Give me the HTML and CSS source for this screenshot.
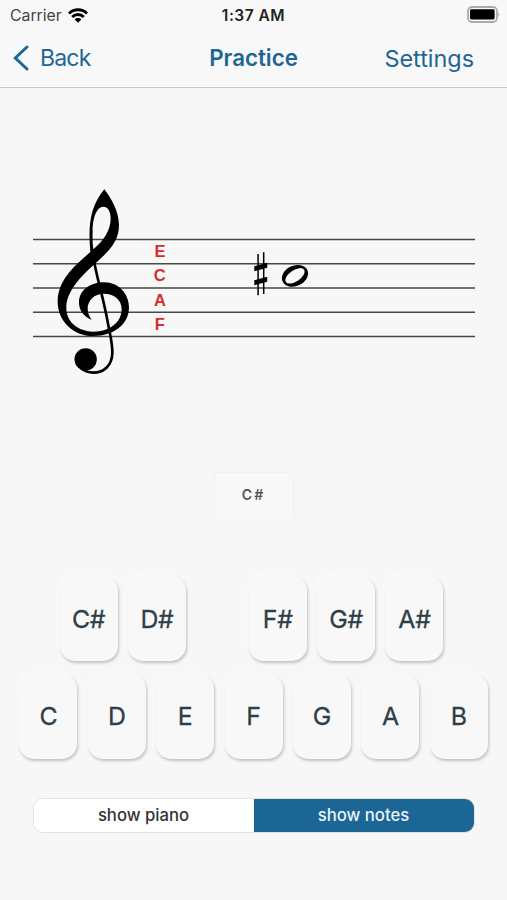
FILE: index.html
```
<!DOCTYPE html>
<html lang="en">

<head>
    <meta charset="utf-8">
    <meta name="viewport" content="width=device-width, initial-scale=1.0">
    <title>Practice</title>
    <link rel="stylesheet" href="styles.css">
</head>

<body>
    <div class="status">
        <div class="carrier">
            <span>Carrier</span>
            <svg width="20" height="15" viewBox="0 0 20 15">
                <g fill="none" stroke="#000" stroke-width="2.8">
                    <path d="M1 5.4C6 .5 14 .5 19 5.4" />
                    <path d="M4.2 8.9C7.4 5.7 12.6 5.7 15.8 8.9" />
                </g>
                <path d="M6.7 11.5C8.6 9.6 11.4 9.6 13.3 11.5L10 14.8Z" />
            </svg>
        </div>
        <span class="time">1:37 AM</span>
        <svg class="battery" width="34" height="17" viewBox="0 0 34 17">
            <rect x="2" y="1" width="29" height="15" rx="4.2" fill="#f8f8f8" stroke="#aaa" stroke-width="1.8" />
            <rect x="4" y="3.3" width="24.6" height="10.2" rx="1.4" />
            <path d="M32.4 6.3Q34.3 8.5 32.4 10.7Z" fill="#aaa" />
        </svg>
    </div>

    <header>
        <a class="back">
            <svg width="16" height="26" viewBox="0 0 16 26">
                <path d="M14 2L2.3 13L14 24" fill="none" stroke="#1c6696" stroke-width="3" stroke-linecap="round" />
            </svg>
            <span>Back</span>
        </a>
        <h1>Practice</h1>
        <a class="settings">Settings</a>
    </header>

    <main>
        <svg class="staff" width="507" height="300" viewBox="0 88 507 300">
            <path d="M33 239.5H475M33 263.8H475M33 288.1H475M33 312.3H475M33 336.5H475" stroke="#484848" stroke-width="1.5" />

            <!-- treble clef -->
            <g transform="translate(25 180) scale(.3333)">
                <path fill-rule="evenodd" d="M238 28C258 54 282 94 282 135C282 182 255 210 215 247C165 291 124 335 124 385C124 426 160 455 205 455C254 455 290 427 290 387C290 358 265 341 237 341C207 341 188 362 188 385C188 400 193 409 200 420C177 409 162 391 162 368C162 330 196 307 238 307C281 307 312 342 312 382C312 434 266 468 205 468C144 468 98 422 98 365C98 300 150 256 196 216C190 145 192 83 238 28Z
                M205 208C238 180 257 149 257 116C257 95 250 80 235 80C214 80 203 116 203 153C202 176 203 194 205 208Z" />
                <path d="M206 235C214 290 232 340 246 415C257 475 263 490 262 520C261 556 237 578 205 578C190 578 178 573 168 565" fill="none" stroke="#000" stroke-width="8" />
                <circle cx="182" cy="538" r="33.5" />
            </g>

            <g class="hints">
                <text x="159.9" y="257">E</text>
                <text x="159.7" y="281.3">C</text>
                <text x="160" y="305.6">A</text>
                <text x="159.7" y="330">F</text>
            </g>

            <!-- sharp -->
            <path d="M258.1 254V295.3M263.7 252.3V294" stroke="#000" stroke-width="1.5" />
            <path d="M254.3 266.2L267.2 262.8V267.8L254.3 271.2ZM254.3 280.2L267.2 276.8V281.8L254.3 285.2Z" />

            <!-- note head -->
            <ellipse cx="295" cy="275.8" rx="13.6" ry="10.2" transform="rotate(-25 295 275.8)" />
            <ellipse cx="295" cy="275.8" rx="11" ry="5.6" transform="rotate(-34 295 275.8)" fill="#f8f8f8" />
        </svg>

        <div class="answer">C#</div>

        <div class="keys sharps">
            <button class="key">C#</button>
            <button class="key">D#</button>
            <span class="gap"></span>
            <button class="key">F#</button>
            <button class="key">G#</button>
            <button class="key">A#</button>
        </div>
        <div class="keys naturals">
            <button class="key">C</button>
            <button class="key">D</button>
            <button class="key">E</button>
            <button class="key">F</button>
            <button class="key">G</button>
            <button class="key">A</button>
            <button class="key">B</button>
        </div>

        <div class="switch">
            <button>show piano</button>
            <button class="selected">show notes</button>
        </div>
    </main>
</body>

</html>
```
FILE: styles.css
```
* {
    box-sizing: border-box;
}

body {
    margin: 0;
    height: 900px;
    overflow: hidden;
    background-color: #f7f7f7;
    font-family: Inter, sans-serif;
    color: #2f3e46;
}

button {
    border: 0;
    padding: 0;
    font-family: inherit;
    color: inherit;
}

.status {
    display: grid;
    grid-template-columns: 1fr auto 1fr;
    align-items: center;
    height: 30px;
    padding: 0 7px;
    background-color: #f8f8f8;
    color: #222;
    font-size: 15.8px;
}

.carrier {
    display: flex;
    align-items: center;
    gap: 6px;
    margin-left: 3px;
    color: #444;
}

.time {
    font-weight: 600;
    font-size: 15.5px;
    letter-spacing: .5px;
}

.battery {
    justify-self: end;
    margin-top: -2px;
}

header {
    display: grid;
    grid-template-columns: 1fr auto 1fr;
    align-items: center;
    height: 58px;
    padding: 0 13px 2px;
    border-bottom: 1px solid #c8c8c8;
    background-color: #f8f8f8;
    color: #1c6696;
    font-size: 23px;
}

.back {
    display: flex;
    align-items: center;
    gap: 11px;
    letter-spacing: -.8px;
}

h1 {
    margin: 0 0 1px;
    font-size: 22.3px;
    font-weight: 600;
}

.settings {
    justify-self: end;
    margin: 2px 20px 0 0;
    font-size: 23.4px;
}

main {
    display: flex;
    flex-direction: column;
    align-items: center;
}

.hints text {
    fill: #d32f2f;
    font-family: "Liberation Sans", sans-serif;
    font-size: 16.5px;
    font-weight: 700;
    text-anchor: middle;
}

.answer {
    width: 80px;
    height: 46px;
    margin-top: 84px;
    border: 1px solid #f2f2f2;
    border-bottom: 0;
    border-radius: 3px;
    background-color: #f8f8f8;
    color: #555;
    font-size: 14px;
    font-weight: 600;
    line-height: 44px;
    letter-spacing: 2px;
    text-align: center;
}

.keys {
    display: flex;
    gap: 10.4px;
}

.sharps {
    margin: 58px 4px 0 0;
}

.gap {
    width: 42px;
}

.naturals {
    margin-top: 13px;
}

.key {
    width: 58px;
    height: 85px;
    border-radius: 15px;
    background-color: #f8f8f8;
    box-shadow: 1px 2px 3px rgba(0, 0, 0, .22), -2px -2px 3px rgba(255, 255, 255, .5);
    font-size: 24.8px;
    font-weight: 400;
    letter-spacing: -.3px;
    -webkit-text-stroke: .3px;
}

.naturals .key {
    padding-bottom: 1px;
}

.switch {
    display: flex;
    width: 442px;
    height: 35px;
    margin-top: 39px;
    border: 1px solid #e3e3e3;
    border-radius: 10px;
    overflow: hidden;
}

.switch button {
    flex: 1;
    padding-bottom: 1px;
    background-color: #fff;
    color: #333;
    font-size: 16.7px;
    font-weight: 500;
}

.switch .selected {
    background-color: #1c6696;
    color: #e8f4fb;
}
```
